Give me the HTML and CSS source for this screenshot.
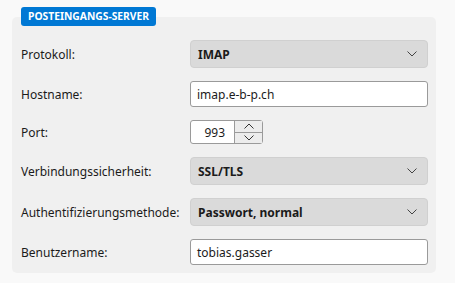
FILE: index.html
```html
<!DOCTYPE html>
<html lang="de">
<head>
<meta charset="utf-8">
<link rel="stylesheet" href="styles.css">
</head>
<body>
<div class="wrap">
  <div class="badge">POSTEINGANGS-SERVER</div>
  <div class="panel">
    <div class="label">Protokoll:</div>
    <div class="select"><span>IMAP</span><svg class="chev" width="10" height="6" viewBox="0 0 10 6"><path d="M0.5 0.5 L5 5 L9.5 0.5" fill="none" stroke="#444" stroke-width="1"/></svg></div>

    <div class="label">Hostname:</div>
    <div class="input">imap.e-b-p.ch</div>

    <div class="label">Port:</div>
    <div class="port">
      <div class="num">993</div>
      <div class="spin">
        <div class="btn"><svg width="10" height="6" viewBox="0 0 10 6"><path d="M0.5 5.5 L5 1 L9.5 5.5" fill="none" stroke="#333" stroke-width="1"/></svg></div>
        <div class="btn"><svg width="10" height="6" viewBox="0 0 10 6"><path d="M0.5 0.5 L5 5 L9.5 0.5" fill="none" stroke="#333" stroke-width="1"/></svg></div>
      </div>
    </div>

    <div class="label">Verbindungssicherheit:</div>
    <div class="select"><span>SSL/TLS</span><svg class="chev" width="10" height="6" viewBox="0 0 10 6"><path d="M0.5 0.5 L5 5 L9.5 0.5" fill="none" stroke="#444" stroke-width="1"/></svg></div>

    <div class="label">Authentifizierungsmethode:</div>
    <div class="select"><span>Passwort, normal</span><svg class="chev" width="10" height="6" viewBox="0 0 10 6"><path d="M0.5 0.5 L5 5 L9.5 0.5" fill="none" stroke="#444" stroke-width="1"/></svg></div>

    <div class="label">Benutzername:</div>
    <div class="input">tobias.gasser</div>
  </div>
</div>
</body>
</html>
```
FILE: styles.css
```css
html, body {
  margin: 0;
  padding: 0;
  background: #f9f9f9;
  font-family: "Noto Sans", "Open Sans", sans-serif;
  color: #1b1b1b;
}
.wrap {
  display: flex;
  flex-direction: column;
  align-items: flex-start;
  padding: 7px 0 0 12px;
}
.badge {
  position: relative;
  z-index: 1;
  margin-left: 9px;
  height: 19px;
  line-height: 19px;
  padding: 0 7px;
  background: #0078d4;
  color: #fff;
  font-size: 10.3px;
  font-weight: 700;
  border-radius: 3px;
}
.panel {
  margin-top: -9px;
  width: 424px;
  box-sizing: border-box;
  background: #f0f0f0;
  border-radius: 5px;
  padding: 23px 8px 8px 9px;
  display: grid;
  grid-template-columns: 169px 238px;
  grid-template-rows: 28px 26px 24px 28px 28px 26px;
  row-gap: 13px;
  align-items: center;
}
.label {
  font-size: 12px;
}
.select {
  height: 28px;
  box-sizing: border-box;
  background: #dadada;
  border: 1px solid #d0d0d0;
  border-radius: 4px;
  display: flex;
  align-items: center;
  justify-content: space-between;
  padding: 0 10px 0 7px;
  font-size: 12px;
  font-weight: 700;
}
.chev { display: block; }
.input {
  height: 26px;
  box-sizing: border-box;
  background: #fff;
  border: 1px solid #9a9a9a;
  border-radius: 3px;
  display: flex;
  align-items: center;
  padding: 0 6px;
  font-size: 12px;
}
.port {
  width: 73px;
  height: 24px;
  box-sizing: border-box;
  border: 1px solid #9a9a9a;
  border-radius: 3px;
  background: #fff;
  display: flex;
}
.num {
  flex: 1;
  display: flex;
  align-items: center;
  justify-content: flex-end;
  padding-right: 9px;
  font-size: 12px;
}
.spin {
  width: 27px;
  display: flex;
  flex-direction: column;
  border-left: 1px solid #9a9a9a;
  background: #ececec;
}
.btn {
  flex: 1;
  display: flex;
  align-items: center;
  justify-content: center;
}
.btn + .btn { border-top: 1px solid #9a9a9a; }
.btn svg { display: block; }
```
